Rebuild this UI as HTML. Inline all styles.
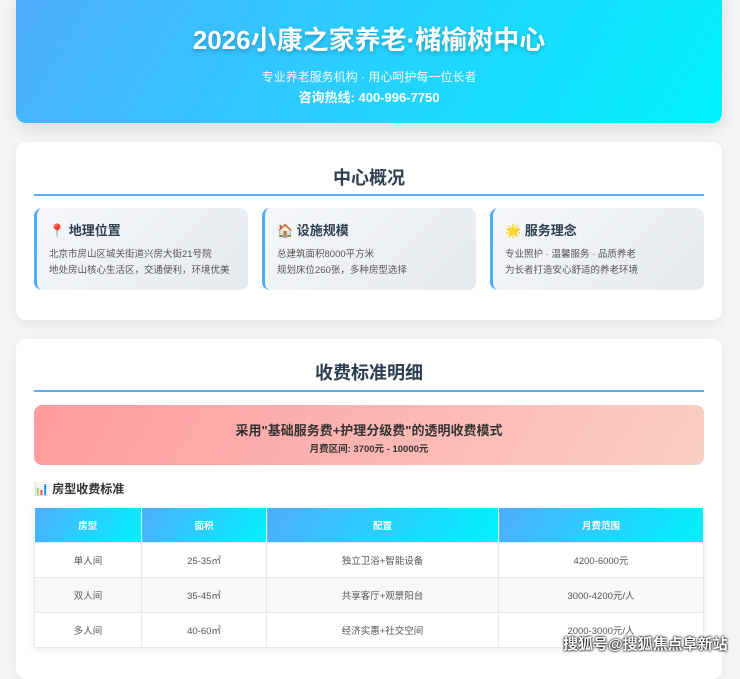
<!DOCTYPE html><html><head><meta charset="utf-8"><style>
*{margin:0;padding:0;box-sizing:border-box}
body{width:740px;height:659px;overflow:hidden;background:#f3f4f6;font-family:"Liberation Sans","Noto Sans CJK SC",sans-serif;color:#333;position:relative}
.hero{position:absolute;left:16px;top:-10px;width:706px;height:133px;border-radius:10px;background:linear-gradient(120deg,#4facfe,#00f2fe);box-shadow:0 6px 16px rgba(0,0,0,.1);color:#fff;text-align:center}
.hero h1{position:absolute;top:30px;width:100%;font-size:26px;font-weight:bold;text-shadow:0 2px 4px rgba(0,0,0,.25)}
.hero .s{position:absolute;top:78px;width:100%;font-size:12px;opacity:.95}
.hero .p{position:absolute;top:97px;width:100%;font-size:13px;font-weight:bold}
.card{position:absolute;left:16px;width:706px;background:#fff;border-radius:10px;box-shadow:0 4px 12px rgba(0,0,0,.06)}
h2{position:absolute;left:18px;width:670px;text-align:center;font-size:18px;color:#2c3e50;font-weight:bold;border-bottom:2px solid #5aaefc;}
.f{position:absolute;top:66px;width:214px;height:82px;border-radius:8px;border-left:3px solid #4facfe;background:linear-gradient(135deg,#f5f7fa,#e6e9ee);padding:12px 0 0 12px}
.f b{display:block;font-size:13px;color:#2c3e50;margin-bottom:8px}
.f p{font-size:9.5px;line-height:16px;color:#555}
.band{position:absolute;left:18px;top:66px;width:670px;height:60px;border-radius:8px;background:linear-gradient(120deg,#ff9a9e,#fad0c4);text-align:center;color:#333}
table{position:absolute;left:18px;top:169px;width:670px;border-collapse:collapse;font-size:9.5px;box-shadow:0 2px 6px rgba(0,0,0,.08)}
th{height:34px;color:#fff;background:linear-gradient(120deg,#4facfe,#00f2fe);font-weight:bold;border-right:1px solid #fff}
td{height:35px;text-align:center;color:#555;border:1px solid #e8e8e8}
tr:nth-child(3) td{background:#f8f8f8}
</style></head><body>
<div class="hero"><h1>2026小康之家养老·槠榆树中心</h1><div class="s">专业养老服务机构 · 用心呵护每一位长者</div><div class="p">咨询热线: 400-996-7750</div></div>
<div class="card" style="top:142px;height:178px">
<h2 style="top:22px;height:32px">中心概况</h2>
<div class="f" style="left:18px"><b>📍 地理位置</b><p>北京市房山区城关街道兴房大街21号院<br>地处房山核心生活区，交通便利，环境优美</p></div>
<div class="f" style="left:246px"><b>🏠 设施规模</b><p>总建筑面积8000平方米<br>规划床位260张，多种房型选择</p></div>
<div class="f" style="left:474px"><b>🌟 服务理念</b><p>专业照护 · 温馨服务 · 品质养老<br>为长者打造安心舒适的养老环境</p></div>
</div>
<div class="card" style="top:339px;height:340px">
<h2 style="top:20px;height:33px">收费标准明细</h2>
<div class="band"><div style="margin-top:15px;font-size:13px;font-weight:bold">采用"基础服务费+护理分级费"的透明收费模式</div><div style="font-size:9.5px;font-weight:bold;margin-top:2px">月费区间: 3700元 - 10000元</div></div>
<div style="position:absolute;left:18px;top:141px;font-size:12px;font-weight:bold;color:#333">📊 房型收费标准</div>
<table><tr><th style="width:107px">房型</th><th style="width:125px">面积</th><th style="width:232px">配置</th><th>月费范围</th></tr>
<tr><td>单人间</td><td>25-35㎡</td><td>独立卫浴+智能设备</td><td>4200-6000元</td></tr>
<tr><td>双人间</td><td>35-45㎡</td><td>共享客厅+观景阳台</td><td>3000-4200元/人</td></tr>
<tr><td>多人间</td><td>40-60㎡</td><td>经济实惠+社交空间</td><td>2000-3000元/人</td></tr></table>
</div>
<div style="position:absolute;left:563px;top:633px;font-size:15px;font-weight:bold;color:#fff;text-shadow:0 0 2px #000,0 0 2px #000">搜狐号@搜狐焦点阜新站</div>
</body></html>
